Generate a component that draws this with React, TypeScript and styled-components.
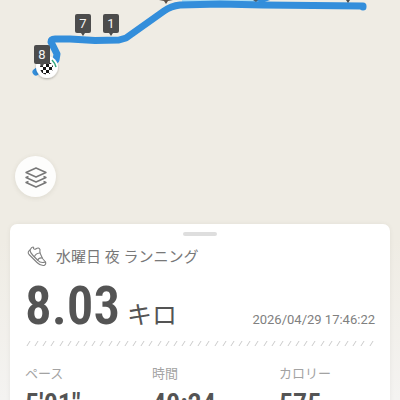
import React from "react";
import styled, { createGlobalStyle } from "styled-components";

const GlobalStyle = createGlobalStyle`
  * { box-sizing: border-box; }
  body {
    margin: 0;
    overflow: hidden;
    background: #efece4;
    font-family: Roboto, "Noto Sans CJK JP", sans-serif;
  }
`;

const Page = styled.main`
  display: flex;
  flex-direction: column;
  height: 100vh;
  overflow: hidden;
  background: linear-gradient(#efece4 0, #efece4 240px, #f4f3f1 400px);
`;

const MapArea = styled.section`
  position: relative;
  flex: none;
  height: 224px;
`;

const Route = styled.svg`
  position: absolute;
  left: 0;
  top: 0;
`;

const Pin = styled.span<{ $x: number; $y: number }>`
  position: absolute;
  left: ${(p) => p.$x}px;
  top: ${(p) => p.$y}px;
  width: 16px;
  height: 19px;
  border-radius: 2px;
  background: #4c4c4c;
  color: #f4f4f4;
  font-size: 13px;
  line-height: 19px;
  text-align: center;

  &::after {
    content: "";
    position: absolute;
    left: 6px;
    top: 19px;
    border: 2px solid transparent;
    border-top: 3px solid #4c4c4c;
  }
`;

const LayersButton = styled.button`
  position: absolute;
  left: 15px;
  bottom: 27px;
  display: grid;
  place-items: center;
  width: 41px;
  height: 41px;
  padding: 0;
  border: 0;
  border-radius: 50%;
  background: #fdfdfc;
  box-shadow: 0 1px 5px rgba(90, 80, 60, 0.12);
`;

const Sheet = styled.article`
  flex: none;
  margin: 0 10px;
  padding: 8px 15px 16px;
  border-radius: 7px 7px 0 0;
  background: #fff;
  box-shadow: 0 0 4px rgba(90, 80, 60, 0.08);
`;

const Handle = styled.div`
  width: 34px;
  height: 4px;
  margin: 0 auto;
  border-radius: 2px;
  background: #dedede;
`;

const Title = styled.h1`
  display: flex;
  align-items: center;
  gap: 8px;
  margin: 9px 0 0;
  padding-left: 1px;
  color: #787878;
  font-size: 15px;
  font-weight: 400;
  line-height: 24px;
`;

const Summary = styled.div`
  display: flex;
  align-items: baseline;
  justify-content: space-between;
  height: 67px;
  line-height: 75px;
`;

const Distance = styled.div`
  display: flex;
  align-items: baseline;
  gap: 7px;
  color: #545454;
`;

const DistanceValue = styled.strong`
  font-family: "Roboto Condensed", "Liberation Sans Narrow", Roboto, sans-serif;
  font-size: 53px;
  font-weight: 600;
`;

const Unit = styled.span`
  font-size: 25px;
`;

const Timestamp = styled.time`
  color: #808080;
  font-size: 13px;
`;

const Divider = styled.div`
  display: flex;
  justify-content: space-between;
  margin-top: 5px;
  padding: 0 3px;
`;

const Slash = styled.i`
  width: 1px;
  height: 5px;
  background: #cacaca;
  transform: skewX(-32deg);
`;

const Stats = styled.dl`
  display: grid;
  grid-template-columns: 127px 127px 1fr;
  margin: 17px 0 0;
`;

const StatLabel = styled.dt`
  color: #a3a3a3;
  font-size: 13px;
  line-height: 22px;
`;

const StatValue = styled.dd`
  margin: 3px 0 0;
  color: #545454;
  font-family: "Roboto Condensed", "Liberation Sans Narrow", Roboto, sans-serif;
  font-size: 28px;
  font-weight: 600;
  line-height: 32px;
`;

const pins = [
  { label: "7", x: 75, y: 14 },
  { label: "1", x: 103, y: 14 },
  { label: "8", x: 34, y: 45 },
];

const stats = [
  { label: "ペース", value: "5'01\"" },
  { label: "時間", value: "40:24" },
  { label: "カロリー", value: "575" },
];

const checks = [
  [0, 1], [0, 3], [1, 0], [1, 2], [1, 4], [2, 1], [2, 3], [3, 0], [3, 2], [3, 4], [4, 1], [4, 3],
];

function RouteDrawing() {
  return (
    <Route width="400" height="100" viewBox="0 0 400 100" aria-hidden="true">
      <defs>
        <filter id="soft" x="-30%" y="-30%" width="160%" height="160%">
          <feDropShadow dx="0" dy="1" stdDeviation="1" floodOpacity="0.3" />
        </filter>
      </defs>
      <path d="M182 0h77v3h-77z" fill="#a9dcf4" />
      <path
        d="M36 72L43 67L56 60L57 54L51 42Q51 39 55 39L70 39L95 40.500L119 40L126 38L164 11Q171 6 180 5L220 4L263 5L363 6V7"
        fill="none" stroke="#338edb" strokeWidth="7" strokeLinecap="round" strokeLinejoin="round"
      />
      <path d="M254 0h16l-8 3z" fill="#338edb" />
      <path d="M159 0h14l-5 1l-2 3l-2 -3z" fill="#5c5048" />
      <path d="M253 0h5l-2 2z" fill="#4c5c68" />
      <path d="M346 0h4l-2 3z" fill="#4c4c4c" />
      <circle cx="47" cy="67" r="11" fill="#fff" filter="url(#soft)" />
      <path d="M52 60Q55 63 56 67" fill="none" stroke="#31a67b" strokeWidth="1.500" />
      <clipPath id="flag"><circle cx="46.500" cy="68" r="6.500" /></clipPath>
      <g clipPath="url(#flag)">
        {checks.map(([row, col]) => (
          <rect key={`${row}-${col}`} x={40 + col * 3} y={61 + row * 3} width="3" height="3" fill="#151515" />
        ))}
      </g>
    </Route>
  );
}

function LayersIcon() {
  return (
    <svg width="22" height="22" viewBox="0 0 22 22" fill="none" stroke="#777" strokeWidth="1.400" strokeLinejoin="round" aria-hidden="true">
      <path d="M11 2L21 6.500L11 11L1 6.500Z" />
      <path d="M3.500 10.500L1 11.500L11 16L21 11.500L18.500 10.500" />
      <path d="M3.500 15.500L1 16.500L11 21L21 16.500L18.500 15.500" />
    </svg>
  );
}

function ShoeIcon() {
  return (
    <svg width="22" height="22" viewBox="0 0 22 22" fill="none" stroke="#808080" strokeWidth="1.100" strokeLinejoin="round" strokeLinecap="round" aria-hidden="true">
      <path d="M4 4Q5.500 1 7 1Q8 1 7.500 2.500Q8.500 4 10.500 2.500Q12.500 1 14 3.500Q13.500 5.500 14.500 8L16.500 12.500L19.500 16Q20.500 18.500 18 19.500Q14.500 20 11 16.500L3 8.500Q1 6 4 4Z" />
      <path d="M4 4Q4 6.500 7 9.500L12 14.500Q14.500 17.500 19.500 16" />
      <path d="M8.500 10.500Q9.500 7.500 13.800 7M12 14Q12.500 11.500 16.300 12" />
    </svg>
  );
}

export default function App() {
  return (
    <>
      <GlobalStyle />
      <Page>
        <MapArea>
          <RouteDrawing />
          {pins.map((pin) => (
            <Pin key={pin.label} $x={pin.x} $y={pin.y}>{pin.label}</Pin>
          ))}
          <LayersButton type="button" aria-label="レイヤー">
            <LayersIcon />
          </LayersButton>
        </MapArea>
        <Sheet>
          <Handle />
          <Title>
            <ShoeIcon />
            水曜日 夜 ランニング
          </Title>
          <Summary>
            <Distance>
              <DistanceValue>8.03</DistanceValue>
              <Unit>キロ</Unit>
            </Distance>
            <Timestamp dateTime="2026-04-29T17:46:22">2026/04/29 17:46:22</Timestamp>
          </Summary>
          <Divider>
            {Array.from({ length: 43 }, (_, i) => <Slash key={i} />)}
          </Divider>
          <Stats>
            {stats.map((stat) => (
              <div key={stat.label}>
                <StatLabel>{stat.label}</StatLabel>
                <StatValue>{stat.value}</StatValue>
              </div>
            ))}
          </Stats>
        </Sheet>
      </Page>
    </>
  );
}
